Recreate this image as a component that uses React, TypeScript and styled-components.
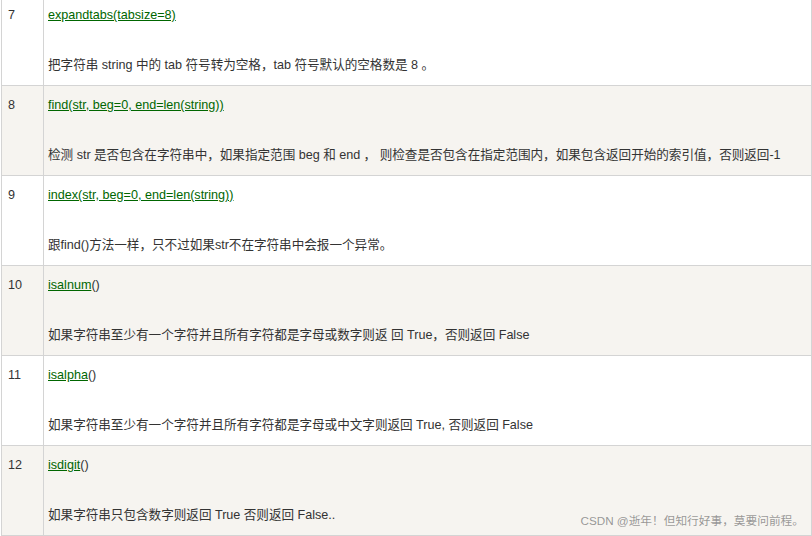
import React from "react";
import styled, { createGlobalStyle } from "styled-components";

const Global = createGlobalStyle`
  html, body { margin: 0; padding: 0; background: #fff; }
  body { width: 812px; height: 536px; overflow: hidden; }
`;

const Page = styled.div`
  position: relative;
  width: 812px;
  height: 536px;
  overflow: hidden;
  font-family: "Liberation Sans", Arial, "Noto Sans CJK SC", sans-serif;
  font-size: 12.6px;
  color: #333;
`;

const Table = styled.table`
  border-collapse: collapse;
  table-layout: fixed;
  width: 811px;
  margin: -5px 0 0 1px;
`;

const Row = styled.tr<{ $alt: boolean }>`
  background: ${(p) => (p.$alt ? "#f6f4f0" : "#ffffff")};
`;

const NumCell = styled.td`
  width: 29px;
  border: 1px solid #d4d4d4;
  padding: 7px 6px;
  vertical-align: top;
  line-height: 25px;
  height: 75px;
`;

const DescCell = styled.td`
  border: 1px solid #d4d4d4;
  padding: 7px 4px;
  vertical-align: top;
  line-height: 25px;
  height: 75px;
`;

const Link = styled.a`
  color: #006600;
  text-decoration: underline;
`;

const Plain = styled.span`
  color: #333;
`;

const Desc = styled.div`
  margin-top: 25px;
  white-space: nowrap;
  letter-spacing: -0.02px;
`;

const Watermark = styled.div`
  position: absolute;
  right: 8px;
  bottom: 8px;
  font-size: 11.7px;
  color: rgba(120, 120, 120, 0.75);
  white-space: nowrap;
`;

type Item = { n: number; link: string; rest?: string; desc: string };

const items: Item[] = [
  { n: 7, link: "expandtabs(tabsize=8)", desc: "把字符串 string 中的 tab 符号转为空格，tab 符号默认的空格数是 8 。" },
  {
    n: 8,
    link: "find(str, beg=0, end=len(string))",
    desc: "检测 str 是否包含在字符串中，如果指定范围 beg 和 end ， 则检查是否包含在指定范围内，如果包含返回开始的索引值，否则返回-1",
  },
  {
    n: 9,
    link: "index(str, beg=0, end=len(string))",
    desc: "跟find()方法一样，只不过如果str不在字符串中会报一个异常。",
  },
  { n: 10, link: "isalnum", rest: "()", desc: "如果字符串至少有一个字符并且所有字符都是字母或数字则返 回 True，否则返回 False" },
  { n: 11, link: "isalpha", rest: "()", desc: "如果字符串至少有一个字符并且所有字符都是字母或中文字则返回 True, 否则返回 False" },
  { n: 12, link: "isdigit", rest: "()", desc: "如果字符串只包含数字则返回 True 否则返回 False.." },
];

export default function App() {
  return (
    <Page>
      <Global />
      <Table>
        <tbody>
          {items.map((it, i) => (
            <Row key={it.n} $alt={i % 2 === 1}>
              <NumCell>{it.n}</NumCell>
              <DescCell>
                <div>
                  <Link href="#">{it.link}</Link>
                  {it.rest && <Plain>{it.rest}</Plain>}
                </div>
                <Desc>{it.desc}</Desc>
              </DescCell>
            </Row>
          ))}
        </tbody>
      </Table>
      <Watermark>CSDN @逝年！但知行好事，莫要问前程。</Watermark>
    </Page>
  );
}
